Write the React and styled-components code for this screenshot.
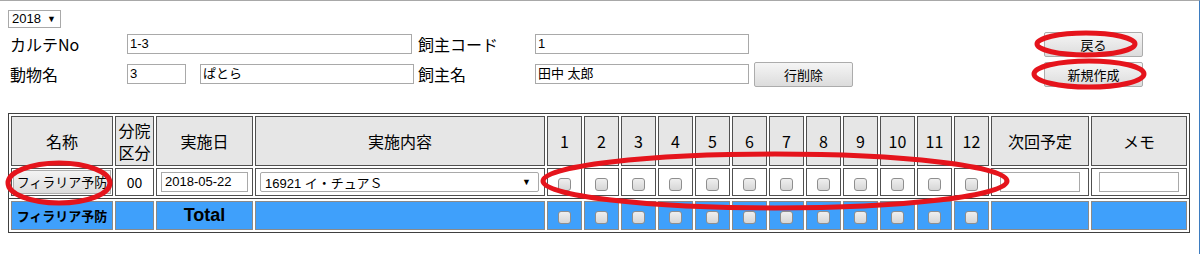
import React from "react";
import styled, { createGlobalStyle } from "styled-components";

const GlobalStyle = createGlobalStyle`
  * { box-sizing: border-box; }
  body {
    margin: 0;
    background: #fff;
    font-family: "Liberation Sans", "Noto Sans CJK JP", sans-serif;
    color: #000;
  }
`;

const Frame = styled.div`
  position: relative;
  width: 1200px;
  height: 254px;
  border-top: 1px solid #a8a8a8;
  border-right: 1px solid #3d7cc0;
  padding: 8px 0 0 8px;
  overflow: hidden;
`;

const YearSelect = styled.div`
  display: inline-flex;
  align-items: center;
  gap: 6px;
  height: 18px;
  padding: 0 4px 0 3px;
  border: 1px solid #a9a9a9;
  font-size: 13px;
  line-height: 16px;
  span { font-size: 9px; }
`;

const Top = styled.div`
  display: flex;
  align-items: flex-start;
`;

const Form = styled.div`
  display: flex;
  flex-direction: column;
  gap: 10px;
  padding-top: 6px;
`;

const Row = styled.div`
  display: flex;
  align-items: center;
  height: 20px;
`;

const Label = styled.div`
  width: ${(p) => p.$w || 119}px;
  padding-left: ${(p) => p.$pl || 2}px;
  font-family: "Noto Sans CJK JP", sans-serif;
  font-size: 16px;
  line-height: 20px;
`;

const Input = styled.div`
  width: ${(p) => p.$w}px;
  height: 20px;
  margin-left: ${(p) => p.$ml || 0}px;
  border: 1px solid #a9a9a9;
  padding: 0 2px;
  font-size: 13px;
  line-height: 18px;
  white-space: nowrap;
  overflow: hidden;
  font-family: "Liberation Sans", "Noto Sans CJK JP", sans-serif;
`;

const Button = styled.div`
  display: flex;
  align-items: center;
  justify-content: center;
  width: ${(p) => p.$w || 99}px;
  height: 25px;
  margin-left: ${(p) => p.$ml || 0}px;
  border: 1px solid #acacac;
  border-radius: 2px;
  background: linear-gradient(#f5f5f5, #dcdcdc);
  font-family: "Noto Sans CJK JP", sans-serif;
  font-size: 13px;
`;

const Side = styled.div`
  display: flex;
  flex-direction: column;
  gap: 5px;
  margin-left: auto;
  margin-right: 56px;
  margin-top: 4px;
`;

const Table = styled.table`
  width: 1180px;
  table-layout: fixed;
  border-collapse: separate;
  border-spacing: 2px;
  border: 1px solid #404040;
  margin-top: ${(p) => p.$mt || 0}px;
  font-family: "Noto Sans CJK JP", sans-serif;
`;

const Th = styled.th`
  height: 50px;
  padding: 0;
  border: 1px solid #505050;
  background: #e6e6e6;
  font-weight: normal;
  font-size: 16px;
  line-height: 22px;
`;

const Td = styled.td`
  height: 28px;
  padding: 0;
  border: 1px solid #505050;
  text-align: center;
  font-size: 14px;
`;

const BlueTd = styled.td`
  height: 29px;
  padding: 0;
  border: 1px solid #8a8a8a;
  background: #3fa0fb;
  text-align: center;
  font-weight: bold;
  font-size: ${(p) => (p.$big ? 18 : 13)}px;
  font-family: ${(p) =>
    p.$big ? '"Liberation Sans", sans-serif' : '"Noto Sans CJK JP", sans-serif'};
`;

const NameButton = styled.div`
  margin: 0 1px;
  height: 24px;
  border: 1px solid #acacac;
  background: linear-gradient(#f3f3f3, #dddddd);
  font-size: 13px;
  line-height: 22px;
  white-space: nowrap;
  overflow: hidden;
`;

const CellInput = styled.div`
  width: ${(p) => p.$w}px;
  height: 20px;
  margin: 0 auto;
  border: 1px solid #a9a9a9;
  text-align: left;
  padding: 0 3px;
  font-family: "Liberation Sans", sans-serif;
  font-size: 13px;
  line-height: 18px;
  background: #fff;
`;

const Select = styled.div`
  display: flex;
  justify-content: space-between;
  align-items: center;
  width: 279px;
  height: 20px;
  margin-left: 4px;
  border: 1px solid #a9a9a9;
  border-radius: 2px;
  padding: 0 7px 0 4px;
  font-size: 13px;
  font-family: "Liberation Sans", "Noto Sans CJK JP", sans-serif;
  span { font-size: 9px; }
`;

const Check = styled.span`
  display: inline-block;
  vertical-align: middle;
  width: 13px;
  height: 13px;
  border: 1px solid #8e8e8e;
  border-radius: 3px;
  background: linear-gradient(#efefef, #d6d6d6);
`;

const Marks = styled.svg`
  position: absolute;
  left: 0;
  top: 0;
  pointer-events: none;
`;

const widths = [102, 39, 97, 290, ...Array(12).fill(35), 98, 96];
const months = Array.from({ length: 12 }, (_, i) => i + 1);

function Cols() {
  return (
    <colgroup>
      {widths.map((w, i) => (
        <col key={i} style={{ width: w }} />
      ))}
    </colgroup>
  );
}

export default function App() {
  return (
    <Frame>
      <GlobalStyle />
      <YearSelect>
        2018 <span>▼</span>
      </YearSelect>
      <Top>
        <Form>
          <Row>
            <Label>カルテNo</Label>
            <Input $w={285}>1-3</Input>
            <Label $pl={6} $w={123}>飼主コード</Label>
            <Input $w={214}>1</Input>
          </Row>
          <Row>
            <Label>動物名</Label>
            <Input $w={59}>3</Input>
            <Input $w={214} $ml={14}>ぱとら</Input>
            <Label $pl={4} $w={121}>飼主名</Label>
            <Input $w={214}>田中 太郎</Input>
            <Button $w={99} $ml={5}>行削除</Button>
          </Row>
        </Form>
        <Side>
          <Button>戻る</Button>
          <Button>新規作成</Button>
        </Side>
      </Top>

      <Table $mt={26}>
        <Cols />
        <thead>
          <tr>
            <Th>名称</Th>
            <Th>分院<br />区分</Th>
            <Th>実施日</Th>
            <Th>実施内容</Th>
            {months.map((m) => (
              <Th key={m}>{m}</Th>
            ))}
            <Th>次回予定</Th>
            <Th>メモ</Th>
          </tr>
        </thead>
        <tbody>
          <tr>
            <Td>
              <NameButton>フィラリア予防</NameButton>
            </Td>
            <Td>00</Td>
            <Td>
              <CellInput $w={87}>2018-05-22</CellInput>
            </Td>
            <Td>
              <Select>
                16921 イ・チュアＳ <span>▼</span>
              </Select>
            </Td>
            {months.map((m) => (
              <Td key={m}>
                <Check />
              </Td>
            ))}
            <Td>
              <CellInput $w={80} />
            </Td>
            <Td>
              <CellInput $w={80} />
            </Td>
          </tr>
        </tbody>
      </Table>
      <Table $mt={-1}>
        <Cols />
        <tbody>
          <tr>
            <BlueTd>フィラリア予防</BlueTd>
            <BlueTd />
            <BlueTd $big>Total</BlueTd>
            <BlueTd />
            {months.map((m) => (
              <BlueTd key={m}>
                <Check />
              </BlueTd>
            ))}
            <BlueTd />
            <BlueTd />
          </tr>
        </tbody>
      </Table>

      <Marks width="1200" height="254">
        <g fill="none" stroke="#e5141c" strokeWidth="5">
          <ellipse cx="1086" cy="43" rx="49" ry="11" />
          <ellipse cx="1089" cy="73" rx="55" ry="13" />
          <ellipse cx="59" cy="182" rx="51" ry="20" />
          <ellipse cx="775" cy="180" rx="232" ry="27" />
        </g>
      </Marks>
    </Frame>
  );
}
